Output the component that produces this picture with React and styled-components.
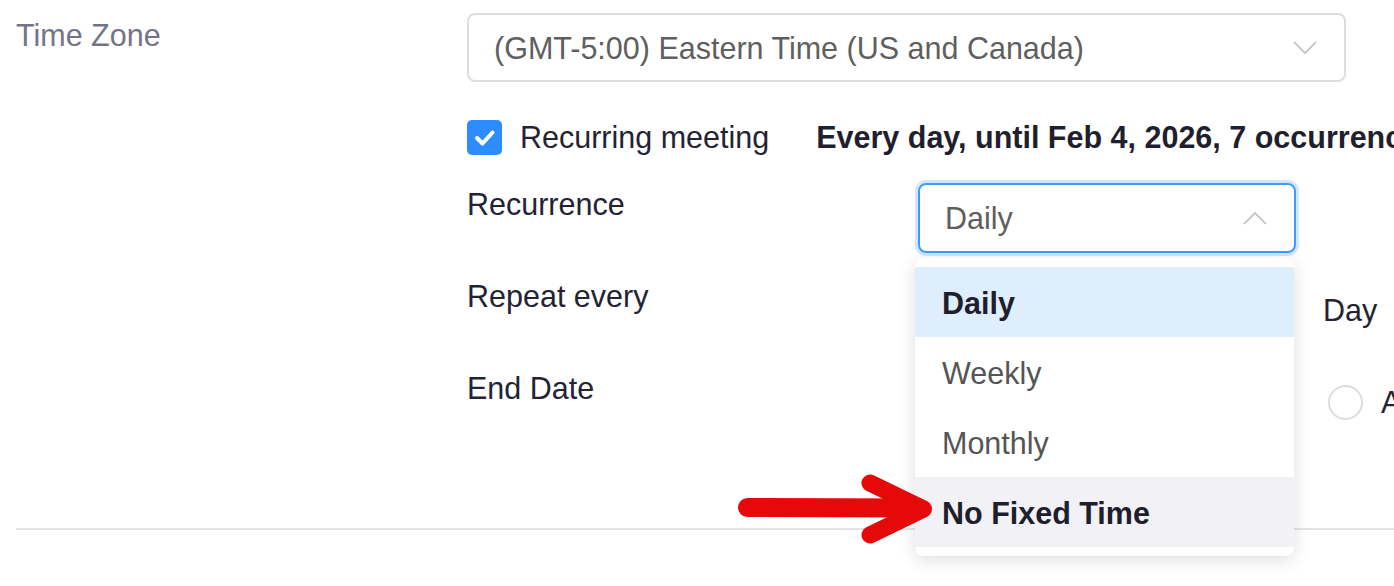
import * as React from "react";
import styled, { createGlobalStyle } from "styled-components";

const GlobalStyle = createGlobalStyle`
  html, body {
    margin: 0;
    padding: 0;
    background: #ffffff;
    overflow: hidden;
  }
  body {
    font-family: "Liberation Sans", Arial, Helvetica, sans-serif;
    font-size: 30.5px;
    color: #232333;
  }
`;

const Page = styled.div`
  position: relative;
  width: 1394px;
  height: 586px;
  padding: 13px 0 0 16px;
  box-sizing: border-box;
  overflow: hidden;
`;

const FieldRow = styled.div`
  display: grid;
  grid-template-columns: 451px 1fr;
`;

const FieldLabel = styled.div`
  line-height: 34px;
  margin-top: ${(p) => (p.$muted ? "5px" : "4px")};
  color: ${(p) => (p.$muted ? "#747487" : "#232333")};
  white-space: nowrap;
`;

const Main = styled.div`
  display: flex;
  flex-direction: column;
  min-width: 0;
`;

const SelectBox = styled.div`
  position: relative;
  box-sizing: border-box;
  width: ${(p) => p.$width}px;
  height: ${(p) => p.$height || 70}px;
  display: flex;
  align-items: center;
  justify-content: space-between;
  padding: 0 27px 0 25px;
  border: ${(p) => (p.$open ? "2px solid #3d9bff" : "2px solid #dedede")};
  border-radius: 8px;
  box-shadow: ${(p) => (p.$open ? "0 0 0 3px #d3e6fd" : "none")};
  color: #5f5f5f;
  line-height: 34px;
  white-space: nowrap;
  flex-shrink: 0;
`;

const CheckRow = styled.div`
  display: flex;
  align-items: center;
  height: 35px;
  margin-top: 38px;
  white-space: nowrap;
`;

const CheckBox = styled.span`
  width: 35px;
  height: 35px;
  border-radius: 5px;
  background: #2d8cff;
  display: inline-flex;
  align-items: center;
  justify-content: center;
  flex-shrink: 0;
`;

const CheckText = styled.span`
  margin-left: 18px;
`;

const Summary = styled.span`
  margin-left: 47px;
  font-weight: bold;
  color: #1f1f2e;
`;

const SubGrid = styled.div`
  display: grid;
  grid-template-columns: 451px 1fr;
  grid-auto-rows: 70px;
  row-gap: 22px;
  margin-top: 28px;
`;

const Control = styled.div`
  position: relative;
  display: flex;
  align-items: center;
  white-space: nowrap;
  z-index: ${(p) => (p.$top ? 2 : 0)};
`;

const Unit = styled.span`
  margin-left: 31px;
`;

const Radio = styled.span`
  width: 31px;
  height: 31px;
  border: 2px solid #dcdcdc;
  border-radius: 50%;
  flex-shrink: 0;
  margin-left: 36px;
  margin-right: 18px;
`;

const Menu = styled.ul`
  position: absolute;
  left: -5px;
  top: 73px;
  width: 379px;
  margin: 0;
  padding: 9px 0;
  list-style: none;
  background: #ffffff;
  border-radius: 8px;
  box-shadow: 0 4px 18px rgba(0, 0, 0, 0.13);
  z-index: 5;
`;

const MenuItem = styled.li`
  height: 70px;
  line-height: 72px;
  padding-left: 27px;
  font-weight: ${(p) => (p.$strong ? "bold" : "normal")};
  color: ${(p) => (p.$strong ? "#1e1e2d" : "#555555")};
  background: ${(p) =>
    p.$selected ? "#dfeefd" : p.$hover ? "#f1f1f6" : "transparent"};
`;

const Divider = styled.div`
  height: 2px;
  background: #e4e4e4;
  margin-top: 91px;
`;

const Arrow = styled.svg`
  position: absolute;
  left: 730px;
  top: 465px;
  width: 210px;
  height: 90px;
  z-index: 10;
`;

const Chevron = ({ up }) => (
  <svg width="24" height="14" viewBox="0 0 24 14">
    <polyline
      points={up ? "1,13 12,2 23,13" : "1,1 12,12 23,1"}
      fill="none"
      stroke="#bdbdbd"
      strokeWidth="1.6"
    />
  </svg>
);

const options = [
  { label: "Daily", selected: true, strong: true },
  { label: "Weekly" },
  { label: "Monthly" },
  { label: "No Fixed Time", hover: true, strong: true },
];

export default function App() {
  return (
    <>
      <GlobalStyle />
      <Page>
        <FieldRow>
          <FieldLabel $muted>Time Zone</FieldLabel>
          <Main>
            <SelectBox $width={879} $height={69}>
              <span>(GMT-5:00) Eastern Time (US and Canada)</span>
              <Chevron />
            </SelectBox>
            <CheckRow>
              <CheckBox>
                <svg width="35" height="35" viewBox="0 0 35 35">
                  <polyline
                    points="10,18 15.5,23.5 25.5,12.5"
                    fill="none"
                    stroke="#ffffff"
                    strokeWidth="4"
                    strokeLinecap="round"
                    strokeLinejoin="round"
                  />
                </svg>
              </CheckBox>
              <CheckText>Recurring meeting</CheckText>
              <Summary>Every day, until Feb 4, 2026, 7 occurrences</Summary>
            </CheckRow>
            <SubGrid>
              <FieldLabel>Recurrence</FieldLabel>
              <Control $top>
                <SelectBox $width={378} $open>
                  <span>Daily</span>
                  <Chevron up />
                  <Menu>
                    {options.map((o) => (
                      <MenuItem
                        key={o.label}
                        $selected={o.selected}
                        $hover={o.hover}
                        $strong={o.strong}
                      >
                        {o.label}
                      </MenuItem>
                    ))}
                  </Menu>
                </SelectBox>
              </Control>
              <FieldLabel>Repeat every</FieldLabel>
              <Control>
                <SelectBox $width={374}>
                  <Chevron />
                </SelectBox>
                <Unit>Day</Unit>
              </Control>
              <FieldLabel>End Date</FieldLabel>
              <Control>
                <SelectBox $width={374} />
                <Radio />
                <span>After</span>
              </Control>
            </SubGrid>
          </Main>
        </FieldRow>
        <Divider />
        <Arrow viewBox="0 0 210 90">
          <line
            x1="17.5"
            y1="42.5"
            x2="180"
            y2="43"
            stroke="#e60909"
            strokeWidth="19"
            strokeLinecap="round"
          />
          <polyline
            points="140,18 193.5,44 140,70"
            fill="none"
            stroke="#e60909"
            strokeWidth="17"
            strokeLinecap="round"
            strokeLinejoin="round"
          />
        </Arrow>
      </Page>
    </>
  );
}
